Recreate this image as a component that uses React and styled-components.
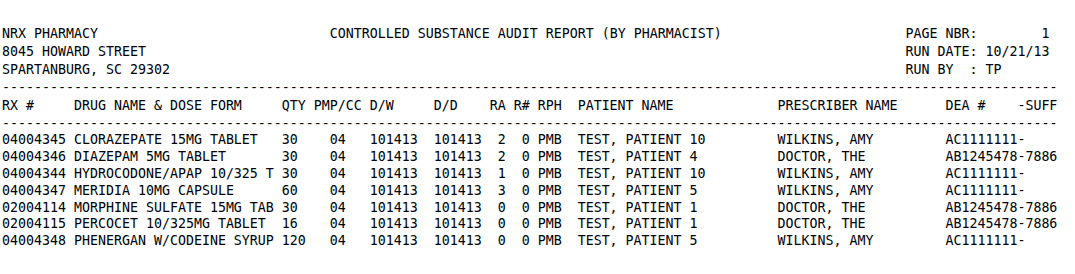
import React from 'react'
import styled, { createGlobalStyle } from 'styled-components'

const GlobalStyle = createGlobalStyle`
  html, body {
    margin: 0;
    padding: 0;
    background: #fff;
  }
`

const Report = styled.div`
  padding: 25px 0 0 2px;
  font-family: 'DejaVu Sans Mono', 'Liberation Mono', monospace;
  font-size: 13.29px;
  color: #000;
  white-space: pre;
`

const Masthead = styled.div`
  display: grid;
  grid-template-columns: 41ch 72ch 19ch;
  line-height: 17.9px;
`

const Block = styled.div`
  display: flex;
  flex-direction: column;
`

const Rule = styled.div`
  line-height: 17.9px;
`

const COLUMNS = '9ch 26ch 4ch 7ch 8ch 7ch 3ch 3ch 5ch 25ch 21ch 9ch 6ch'

const HeadRow = styled.div`
  display: grid;
  grid-template-columns: ${COLUMNS};
  line-height: 17.9px;
`

const Rows = styled.div`
  display: flex;
  flex-direction: column;
`

const Row = styled.div`
  display: grid;
  grid-template-columns: ${COLUMNS};
  line-height: 16.78px;
`

const Cell = styled.span`
  padding-left: ${p => p.$indent || 0}ch;
`

const headings = [
  'RX #', 'DRUG NAME & DOSE FORM', 'QTY', 'PMP/CC', 'D/W', 'D/D',
  'RA', 'R#', 'RPH', 'PATIENT NAME', 'PRESCRIBER NAME', 'DEA #', '-SUFF',
]

// padding inside each column for the data values
const indents = [0, 0, 0, 2, 0, 0, 1, 1, 0, 0, 0, 0, 0]

const rows = [
  ['04004345', 'CLORAZEPATE 15MG TABLET', '30', '04', '101413', '101413', '2', '0', 'PMB', 'TEST, PATIENT 10', 'WILKINS, AMY', 'AC1111111', '-'],
  ['04004346', 'DIAZEPAM 5MG TABLET', '30', '04', '101413', '101413', '2', '0', 'PMB', 'TEST, PATIENT 4', 'DOCTOR, THE', 'AB1245478', '-7886'],
  ['04004344', 'HYDROCODONE/APAP 10/325 T', '30', '04', '101413', '101413', '1', '0', 'PMB', 'TEST, PATIENT 10', 'WILKINS, AMY', 'AC1111111', '-'],
  ['04004347', 'MERIDIA 10MG CAPSULE', '60', '04', '101413', '101413', '3', '0', 'PMB', 'TEST, PATIENT 5', 'WILKINS, AMY', 'AC1111111', '-'],
  ['02004114', 'MORPHINE SULFATE 15MG TAB', '30', '04', '101413', '101413', '0', '0', 'PMB', 'TEST, PATIENT 1', 'DOCTOR, THE', 'AB1245478', '-7886'],
  ['02004115', 'PERCOCET 10/325MG TABLET', '16', '04', '101413', '101413', '0', '0', 'PMB', 'TEST, PATIENT 1', 'DOCTOR, THE', 'AB1245478', '-7886'],
  ['04004348', 'PHENERGAN W/CODEINE SYRUP', '120', '04', '101413', '101413', '0', '0', 'PMB', 'TEST, PATIENT 5', 'WILKINS, AMY', 'AC1111111', '-'],
]

const dashes = '-'.repeat(132)

const App = () => (
  <Report>
    <GlobalStyle/>

    <Masthead>
      <Block>
        <span>NRX PHARMACY</span>
        <span>8045 HOWARD STREET</span>
        <span>SPARTANBURG, SC 29302</span>
      </Block>
      <Block>
        <span>CONTROLLED SUBSTANCE AUDIT REPORT (BY PHARMACIST)</span>
      </Block>
      <Block>
        <span>PAGE NBR:        1</span>
        <span>RUN DATE: 10/21/13</span>
        <span>RUN BY  : TP</span>
      </Block>
    </Masthead>

    <Rule>{dashes}</Rule>

    <HeadRow>
      {headings.map(h => <Cell key={h}>{h}</Cell>)}
    </HeadRow>

    <Rule>{dashes}</Rule>

    <Rows>
      {rows.map(r => (
        <Row key={r[0]}>
          {r.map((v, i) => <Cell key={i} $indent={indents[i]}>{v}</Cell>)}
        </Row>
      ))}
    </Rows>
  </Report>
)

export default App
